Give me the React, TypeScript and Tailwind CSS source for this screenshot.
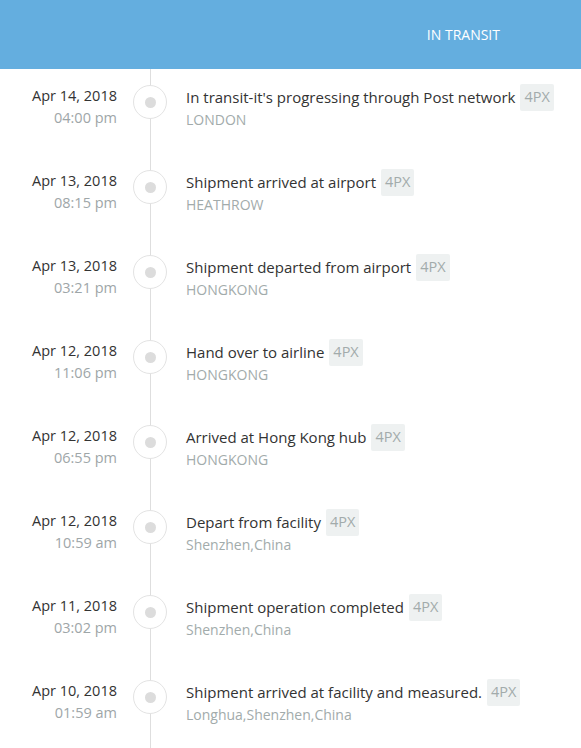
import React from "react";

const events = [
  { date: "Apr 14, 2018", time: "04:00 pm", title: "In transit-it's progressing through Post network", place: "LONDON" },
  { date: "Apr 13, 2018", time: "08:15 pm", title: "Shipment arrived at airport", place: "HEATHROW" },
  { date: "Apr 13, 2018", time: "03:21 pm", title: "Shipment departed from airport", place: "HONGKONG" },
  { date: "Apr 12, 2018", time: "11:06 pm", title: "Hand over to airline", place: "HONGKONG" },
  { date: "Apr 12, 2018", time: "06:55 pm", title: "Arrived at Hong Kong hub", place: "HONGKONG" },
  { date: "Apr 12, 2018", time: "10:59 am", title: "Depart from facility", place: "Shenzhen,China" },
  { date: "Apr 11, 2018", time: "03:02 pm", title: "Shipment operation completed", place: "Shenzhen,China" },
  { date: "Apr 10, 2018", time: "01:59 am", title: "Shipment arrived at facility and measured.", place: "Longhua,Shenzhen,China" },
];

export default function App() {
  return (
    <div className="w-[581px] h-[748px] overflow-hidden bg-white" style={{ fontFamily: '"Open Sans", "Noto Sans", sans-serif' }}>
      <div className="h-[69px] bg-[#64aedf] flex items-center justify-end pr-[81px]">
        <span className="text-white text-[14px]">IN TRANSIT</span>
      </div>
      <div className="relative pt-[15px]">
        <div className="absolute left-[150px] top-0 bottom-0 w-px bg-[#dedede]" />
        {events.map((e, i) => (
          <div key={i} className="relative flex h-[85px]">
            <div className="w-[117px] text-right text-[14.5px] leading-[22px] pt-px">
              <div className="text-[#333]">{e.date}</div>
              <div className="text-[#9ea6a8]">{e.time}</div>
            </div>
            <div className="ml-[16px] mt-px w-[34px] h-[34px] rounded-full border border-[#e3e3e3] bg-white flex items-center justify-center">
              <div className="w-[11px] h-[11px] rounded-full bg-[#dcdcdc]" />
            </div>
            <div className="ml-[19px]">
              <div className="flex items-center h-[26px]">
                <span className="text-[15px] text-[#333]">{e.title}</span>
                <span className="ml-[5px] h-[27px] px-[4px] flex items-center bg-[#eef1f1] text-[#a2abab] text-[14.5px] rounded-[2px]">4PX</span>
              </div>
              <div className="text-[14px] leading-[20px] text-[#a2abab]">{e.place}</div>
            </div>
          </div>
        ))}
      </div>
    </div>
  );
}
